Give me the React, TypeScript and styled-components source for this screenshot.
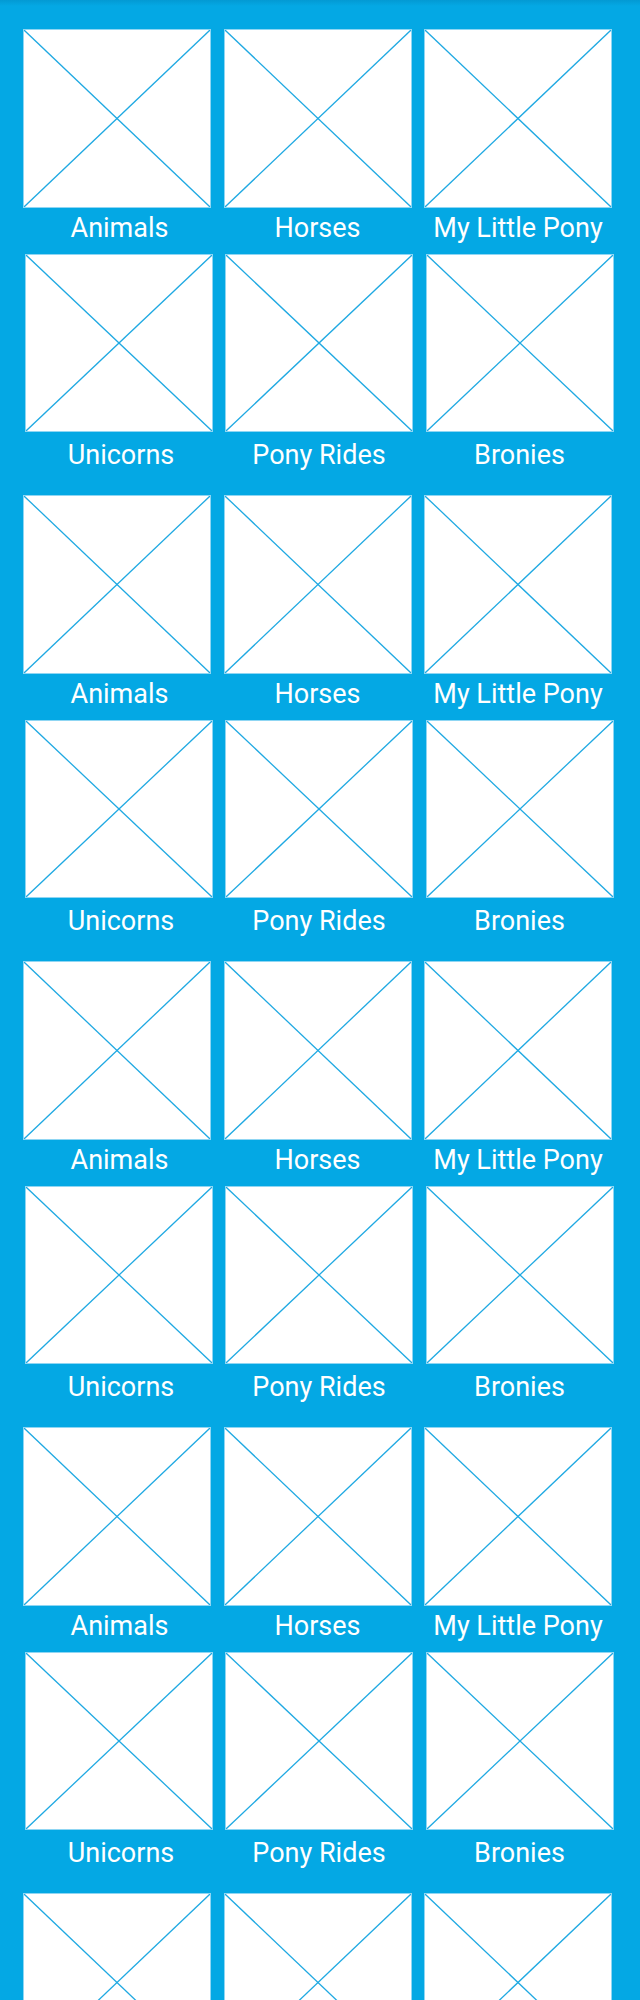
import React from "react";
import styled, { createGlobalStyle } from "styled-components";

const GlobalStyle = createGlobalStyle`
  html, body {
    margin: 0;
    padding: 0;
    background: #04a8e4;
  }
  body {
    font-family: Roboto, "Liberation Sans", Arial, sans-serif;
  }
`;

const Page = styled.div`
  height: 2000px;
  overflow: hidden;
  background: linear-gradient(to bottom, #0399d3 0px, #04a8e4 6px, #04a8e4 100%);
  padding: 29px 0 0 23px;
  box-sizing: border-box;
`;

const Block = styled.section`
  display: flex;
  flex-direction: column;
`;

const Row = styled.div<{ $variant: "a" | "b" }>`
  display: grid;
  grid-template-columns: repeat(3, 188px);
  column-gap: 12.5px;
  padding-left: ${(p) => (p.$variant === "a" ? "0" : "1.5px")};
  padding-bottom: ${(p) => (p.$variant === "a" ? "12px" : "26px")};
`;

const Cell = styled.figure`
  margin: 0;
  display: flex;
  flex-direction: column;
  align-items: stretch;
`;

const Placeholder = styled.div<{ $h: number }>`
  height: ${(p) => p.$h}px;
  background: #ffffff;
  box-sizing: border-box;
  border: 1px solid #8fd6f3;
  display: flex;
`;

const Cross = styled.svg`
  width: 100%;
  height: 100%;
  display: block;
`;

const Caption = styled.figcaption<{ $variant: "a" | "b"; $first: boolean }>`
  margin-top: ${(p) => (p.$variant === "a" ? "7px" : "10px")};
  padding-left: ${(p) => (p.$first ? "5px" : "0")};
  font-size: 27px;
  line-height: 27px;
  font-weight: 400;
  color: #ffffff;
  text-align: center;
  white-space: nowrap;
`;

const rowA = ["Animals", "Horses", "My Little Pony"];
const rowB = ["Unicorns", "Pony Rides", "Bronies"];

function Tile({
  label,
  variant,
  first,
  showCaption = true,
}: {
  label: string;
  variant: "a" | "b";
  first: boolean;
  showCaption?: boolean;
}) {
  return (
    <Cell>
      <Placeholder $h={variant === "a" ? 179 : 178}>
        <Cross viewBox="0 0 100 100" preserveAspectRatio="none">
          <line x1="0" y1="0" x2="100" y2="100" stroke="#1fa9e2" strokeWidth="1.3" vectorEffect="non-scaling-stroke" />
          <line x1="100" y1="0" x2="0" y2="100" stroke="#1fa9e2" strokeWidth="1.3" vectorEffect="non-scaling-stroke" />
        </Cross>
      </Placeholder>
      {showCaption && (
        <Caption $variant={variant} $first={first}>
          {label}
        </Caption>
      )}
    </Cell>
  );
}

export default function App() {
  const blocks = [0, 1, 2, 3];
  return (
    <>
      <GlobalStyle />
      <Page>
        {blocks.map((b) => (
          <Block key={b}>
            <Row $variant="a">
              {rowA.map((l, i) => (
                <Tile key={l} label={l} variant="a" first={i === 0} />
              ))}
            </Row>
            <Row $variant="b">
              {rowB.map((l, i) => (
                <Tile key={l} label={l} variant="b" first={i === 0} />
              ))}
            </Row>
          </Block>
        ))}
        <Block>
          <Row $variant="a">
            {rowA.map((l, i) => (
              <Tile key={l} label={l} variant="a" first={i === 0} showCaption={false} />
            ))}
          </Row>
        </Block>
      </Page>
    </>
  );
}
